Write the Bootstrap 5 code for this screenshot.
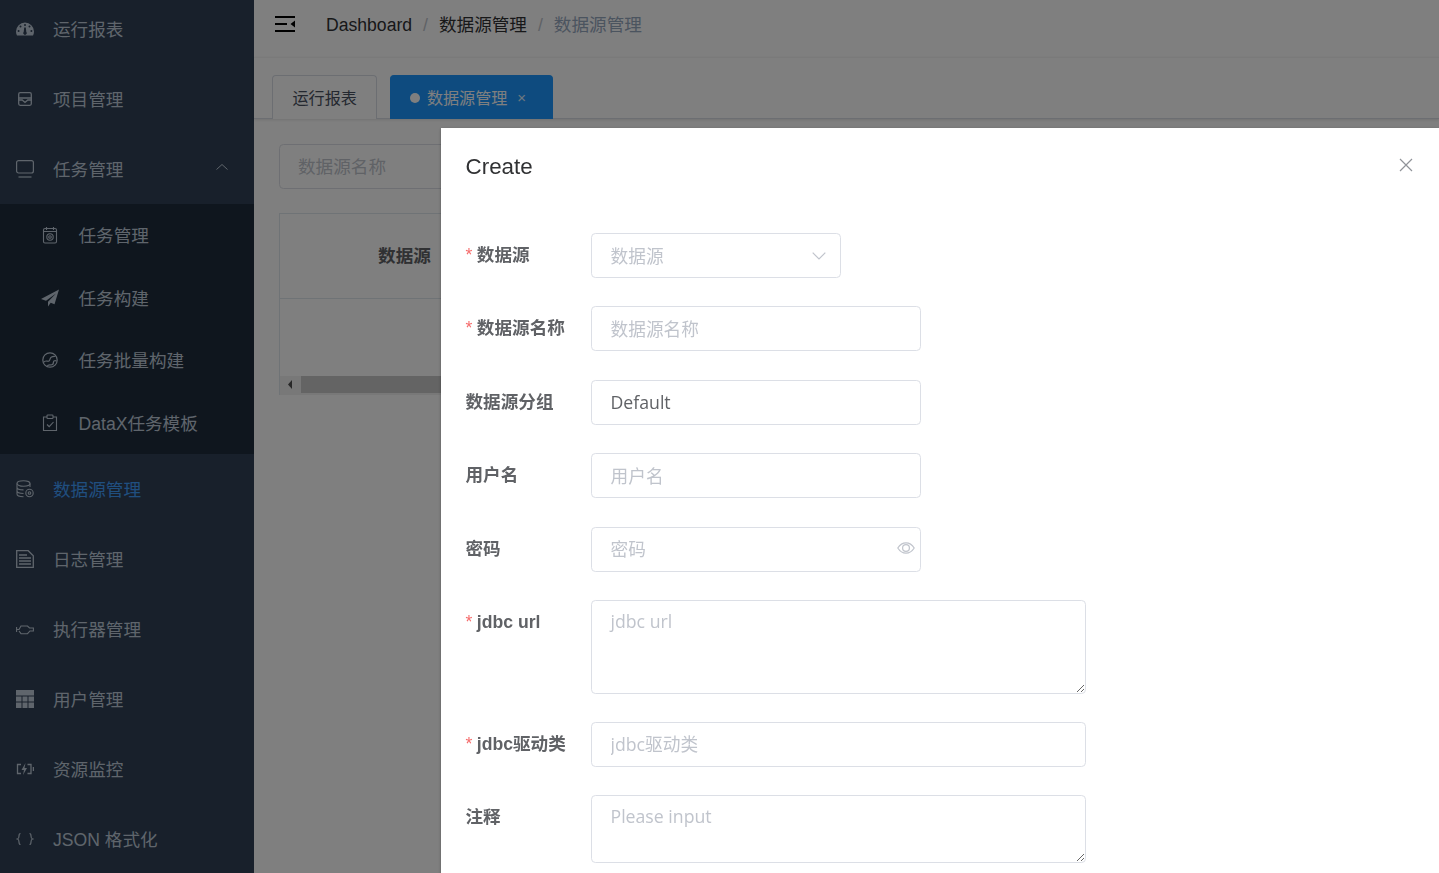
<!DOCTYPE html>
<html lang="zh-CN">
<head>
    <meta charset="UTF-8">
    <meta name="viewport" content="width=device-width, initial-scale=1.0">
    <title>数据源管理</title>
    <link href="https://cdn.jsdelivr.net/npm/bootstrap@5.3.0/dist/css/bootstrap.min.css" rel="stylesheet">
    <style>
        html, body { height: 100%; overflow: hidden; }
        body { font-family: "Liberation Sans", "Noto Sans CJK SC", sans-serif; font-size: 17.6px; background: #fff; color: #303133; }
        .app-wrap { height: 873px; }

        /* sidebar */
        .side-bar { width: 254px; flex: none; background: #304156; color: #bfcbd9; overflow: hidden; }
        .side-list { margin-top: -6px; }
        .side-item { height: 70px; padding-left: 16px; gap: 19px; }
        .side-item span { padding-top: 2px; }
        .side-item svg { width: 18px; height: 18px; flex: none; }
        .side-item.is-active { color: #409eff; }
        .side-item.is-active svg { color: #bfcbd9; }
        .side-sub { background: #1f2d3d; }
        .side-sub .side-item { height: 62.5px; padding-left: 41px; gap: 19.5px; }
        .side-arrow { margin-top: -4px; width: 12px !important; height: 12px !important; margin-left: auto; margin-right: 26px; }

        /* top bar */
        .main-col { min-width: 0; }
        .top-bar { height: 57px; padding: 0 0 7px 21px; gap: 31px; }
        .top-bar svg { width: 20px; height: 18px; flex: none; margin-top: -2px; }
        .crumbs { margin: 0; font-size: 17.6px; --bs-breadcrumb-divider: "/"; --bs-breadcrumb-item-padding-x: 11px; }
        .crumbs .breadcrumb-item.active { color: #97a8be; }
        .crumbs .breadcrumb-item::before { color: #c0c4cc; }
        .tags-bar { height: 62px; padding: 17px 0 0 18px; gap: 13px; border-top: 1px solid #f4f4f4; border-bottom: 1px solid #d8dce5; box-shadow: 0 1px 3px rgba(0,0,0,.12); }
        .tag-tab { height: 44px; padding: 2px 19px 0 19.5px; font-size: 16.1px; background: #fff; border: 1px solid #d8dce5; border-bottom: 0; border-radius: 4px 4px 0 0; color: #495060; }
        .tag-tab.is-current { width: 163px; padding-left: 19px; background: #1d97ff; border-color: #1d97ff; color: #fff; }
        .tag-dot { width: 10px; height: 10px; border-radius: 50%; background: #fff; margin-right: 7px; margin-top: -1px; }
        .tag-x { font-size: 15px; margin-left: 10px; opacity: .85; }

        /* list page behind the dialog */
        .page-body { padding: 25px; }
        .fake-search { width: 240px; height: 45px; padding: 1px 18px 0; border: 1px solid #dcdfe6; border-radius: 4.4px; color: #c0c4cc; }
        .fake-table { margin-top: 24px; height: 182px; width: 1135px; border: 1px solid #dfe6ec; }
        .fake-head { height: 85px; border-bottom: 1px solid #dfe6ec; }
        .fake-th { width: 249px; font-weight: 700; color: #606266; font-size: 17.6px; }
        .fake-scroll { height: 19px; background: #f1f1f1; margin-top: 77px; }
        .fake-scroll svg { width: 21px; height: 17px; flex: none; }
        .fake-thumb { flex: 1; height: 17px; background: #c9c9c9; }

        /* dialog */
        .dlg-box { width: 998px; max-width: none; margin: 128px 0 0 441px; }
        .dlg-box .modal-content { border: 0; border-radius: 0; box-shadow: 0 1px 3px rgba(0,0,0,.3); height: 760px; }
        .dlg-head { padding: 21px 26.5px 0 24.5px; height: 105px; align-items: flex-start; border: 0; }
        .dlg-head .modal-title { font-size: 22.4px; line-height: 36px; color: #303133; font-weight: 400; }
        .dlg-close { border: 0; background: none; padding: 0; margin-top: 9px; line-height: 0; color: #909399; }
        .dlg-body { padding: 0 24.5px; }
        .field-row { margin-bottom: 28.4px; }
        .field-label { width: 125.500px; flex: none; line-height: 45px; font-weight: 700; color: #606266; font-size: 17.6px; white-space: nowrap; }
        .field-req { color: #f56c6c; font-weight: 400; margin-right: 4.500px; }
        .field-input { height: 45px; padding: 0 18.500px; font-family: "Open Sans", "Noto Sans CJK SC", sans-serif; font-size: 17.7px; color: #606266; border: 1px solid #dcdfe6; border-radius: 4.4px; }
        .field-input::placeholder { color: #c0c4cc; opacity: 1; }
        textarea.field-input { padding: 4px 18.500px; line-height: 33px; resize: vertical; min-height: 0; }
        .w-select { width: 250px; }
        .w-input { width: 330px; }
        .w-area { width: 495px; }
        .h-area-a { height: 93.6px; }
        .h-area-b { height: 68px; }
        .field-icon { position: absolute; top: 50%; transform: translateY(-50%); color: #c0c4cc; line-height: 0; }
        .icon-arrow { right: 15px; }
        .icon-eye { right: 6px; margin-top: -1px; }
    </style>
</head>
<body>
<div class="app-wrap d-flex">
    <aside class="side-bar">
        <div class="side-list">
            <div class="side-item d-flex align-items-center">
                <svg viewBox="0 0 18 18" fill="currentColor"><path fill-rule="evenodd" d="M9 2.500a9 9 0 0 1 9 9c0 1.500-.4 2.900-1 4H1c-.6-1.100-1-2.500-1-4a9 9 0 0 1 9-9zM9 4a1 1 0 1 0 0 2 1 1 0 0 0 0-2zM4.500 5.600a1 1 0 1 0 0 2 1 1 0 0 0 0-2zM13.500 5.600a1 1 0 1 0 0 2 1 1 0 0 0 0-2zM2.600 10a1 1 0 1 0 0 2 1 1 0 0 0 0-2zM15.400 10a1 1 0 1 0 0 2 1 1 0 0 0 0-2zM9.800 7.500H8.200L7.700 12a1.700 1.700 0 1 0 2.600 0z"/></svg>
                <span>运行报表</span>
            </div>
            <div class="side-item d-flex align-items-center">
                <svg viewBox="0 0 18 18" fill="none" stroke="currentColor" stroke-width="1.300"><rect x="2.700" y="2.700" width="12.600" height="12.600" rx="1.500"/><path d="M2.700 8h12.600M2.700 10h3.500l2.800 2.500 2.800-2.500h3.500"/></svg>
                <span>项目管理</span>
            </div>
            <div class="side-item d-flex align-items-center">
                <svg viewBox="0 0 18 18" fill="none" stroke="currentColor" stroke-width="1.200"><rect x=".6" y=".6" width="16.800" height="12.400" rx="2"/><path d="M2.500 17h13"/></svg>
                <span>任务管理</span>
                <svg class="side-arrow" viewBox="0 0 12 12" fill="none" stroke="currentColor" stroke-width="1"><path d="M.5 8.500 6 3.500l5.500 5"/></svg>
            </div>
            <div class="side-sub">
                <div class="side-item d-flex align-items-center">
                    <svg viewBox="0 0 18 18" fill="none" stroke="currentColor" stroke-width="1.100"><rect x="2.500" y="2.500" width="13" height="14.500" rx="1.500"/><path d="M2.500 5.500h13M5.500 1v3M12.500 1v3"/><circle cx="9" cy="11" r="3.200"/><circle cx="9" cy="11" r="1.300"/></svg>
                    <span>任务管理</span>
                </div>
                <div class="side-item d-flex align-items-center">
                    <svg viewBox="0 0 18 18" fill="currentColor"><path d="M18 .5 0 10l5 1.700L15 4.500 7 12.800v4.700l2.700-3.700 3.800 1.400z"/></svg>
                    <span>任务构建</span>
                </div>
                <div class="side-item d-flex align-items-center">
                    <svg viewBox="0 0 18 18" fill="none" stroke="currentColor" stroke-width="1.200"><circle cx="9" cy="9" r="7.200"/><path d="M2.500 11.500c2-3 4-.5 5.500-1.500s.5-3 2.500-4 3-.5 4-1M6 15.500c1-2 2.500-1.500 4-1.500s2.500-1.500 2.500-3 2-1.500 3-1"/></svg>
                    <span>任务批量构建</span>
                </div>
                <div class="side-item d-flex align-items-center">
                    <svg viewBox="0 0 18 18" fill="none" stroke="currentColor" stroke-width="1.100"><path d="M6 3H2.500v13.500h13V3H12"/><rect x="6" y="1" width="6" height="3.500" rx=".8"/><path d="m6 10.500 2.200 2.200L12.500 8"/></svg>
                    <span>DataX任务模板</span>
                </div>
            </div>
            <div class="side-item is-active d-flex align-items-center">
                <svg viewBox="0 0 18 18" fill="none" stroke="currentColor" stroke-width="1.100"><ellipse cx="7.500" cy="3.500" rx="6.500" ry="2.700"/><path d="M1 3.500v10.500c0 1.500 3 2.700 6.500 2.700M14 3.500V7M1 7.200c0 1.500 3 2.700 6.500 2.700M1 10.800c0 1.500 3 2.700 6.500 2.700"/><circle cx="13.500" cy="13" r="3.700"/><circle cx="13.500" cy="13" r="1.300"/></svg>
                <span>数据源管理</span>
            </div>
            <div class="side-item d-flex align-items-center">
                <svg viewBox="0 0 18 18" fill="none" stroke="currentColor" stroke-width="1.300"><path d="M.7.7h11.500l5.100 5v11.600H.7z"/><path d="M3 5h8M3 8h12M3 11h12M3 14h12" stroke-width="1.500"/></svg>
                <span>日志管理</span>
            </div>
            <div class="side-item d-flex align-items-center">
                <svg viewBox="0 0 18 18" fill="none" stroke="currentColor" stroke-width="1.100"><path d="M.6 7v5M.6 9.500h2.400L5 6h6.500l2 2h3.900v3h-3.400l-2.500 2.700H5L3 11"/></svg>
                <span>执行器管理</span>
            </div>
            <div class="side-item d-flex align-items-center">
                <svg viewBox="0 0 18 18" fill="currentColor"><path d="M0 0h18v5.500H0zM0 6.500h5.500V11.500H0zM6.500 6.500h5V11.500h-5zM12.500 6.500H18V11.500h-5.500zM0 12.500h5.500V18H0zM6.500 12.500h5V18h-5zM12.500 12.500H18V18h-5.500z"/></svg>
                <span>用户管理</span>
            </div>
            <div class="side-item d-flex align-items-center">
                <svg viewBox="0 0 18 18" fill="none" stroke="currentColor" stroke-width="1.300"><path d="M5 4.500H1.500v9H5M11.500 4.500h3.500v9h-3.500M17.400 7v4"/><path fill="currentColor" stroke="none" d="M9.500 3 5.500 10h2.500l-1 5 4-7H8.500z"/></svg>
                <span>资源监控</span>
            </div>
            <div class="side-item d-flex align-items-center">
                <svg viewBox="0 0 18 18" fill="none" stroke="currentColor" stroke-width="1.200"><path d="M4.500 3.500C3 3.500 3 4.500 3 6s0 2.500-1.500 3C3 9.500 3 10.500 3 12s0 2.500 1.500 2.500M13.500 3.500C15 3.500 15 4.500 15 6s0 2.500 1.500 3c-1.500.5-1.500 1.500-1.500 3s0 2.500-1.500 2.500"/></svg>
                <span>JSON 格式化</span>
            </div>
        </div>
    </aside>

    <div class="main-col flex-grow-1">
        <div class="top-bar d-flex align-items-center">
            <svg viewBox="0 0 20 18" fill="currentColor" class="text-black"><path d="M0 1h20v2H0zM0 8h12v2H0zM0 15h20v2H0zM20 5.500v7L15.500 9z"/></svg>
            <ol class="breadcrumb crumbs">
                <li class="breadcrumb-item">Dashboard</li>
                <li class="breadcrumb-item">数据源管理</li>
                <li class="breadcrumb-item active">数据源管理</li>
            </ol>
        </div>
        <div class="tags-bar d-flex">
            <div class="tag-tab d-flex align-items-center">运行报表</div>
            <div class="tag-tab is-current d-flex align-items-center">
                <span class="tag-dot"></span><span>数据源管理</span><span class="tag-x">×</span>
            </div>
        </div>
        <div class="page-body">
            <div class="fake-search d-flex align-items-center">数据源名称</div>
            <div class="fake-table">
                <div class="fake-head d-flex align-items-center">
                    <div class="fake-th text-center">数据源</div>
                </div>
                <div class="fake-scroll d-flex">
                    <svg viewBox="0 0 21 17" fill="#505050"><path d="M8 8.500 12 4v9z"/></svg>
                    <div class="fake-thumb"></div>
                </div>
            </div>
        </div>
    </div>
</div>

<div class="modal-backdrop show"></div>
<div class="modal d-block">
    <div class="modal-dialog dlg-box">
        <div class="modal-content">
            <div class="modal-header dlg-head">
                <h5 class="modal-title">Create</h5>
                <button type="button" class="dlg-close" aria-label="Close">
                    <svg width="14" height="14" viewBox="0 0 14 14" fill="none" stroke="currentColor" stroke-width="1.200"><path d="M1 1l12 12M13 1 1 13"/></svg>
                </button>
            </div>
            <form class="modal-body dlg-body">
                <div class="field-row d-flex">
                    <label class="field-label"><span class="field-req">*</span>数据源</label>
                    <div class="position-relative w-select">
                        <input class="form-control field-input" placeholder="数据源">
                        <span class="field-icon icon-arrow"><svg width="14" height="8" viewBox="0 0 14 8" fill="none" stroke="currentColor" stroke-width="1.200"><path d="m.7.7 6.300 6.300L13.300.7"/></svg></span>
                    </div>
                </div>
                <div class="field-row d-flex">
                    <label class="field-label"><span class="field-req">*</span>数据源名称</label>
                    <input class="form-control field-input w-input" placeholder="数据源名称">
                </div>
                <div class="field-row d-flex">
                    <label class="field-label">数据源分组</label>
                    <input class="form-control field-input w-input" value="Default">
                </div>
                <div class="field-row d-flex">
                    <label class="field-label">用户名</label>
                    <input class="form-control field-input w-input" placeholder="用户名">
                </div>
                <div class="field-row d-flex">
                    <label class="field-label">密码</label>
                    <div class="position-relative w-input">
                        <input class="form-control field-input" placeholder="密码">
                        <span class="field-icon icon-eye"><svg width="18" height="14" viewBox="0 0 18 14" fill="none" stroke="currentColor" stroke-width="1.200"><path d="M.8 7C3 3.500 5.800 1.800 9 1.800s6 1.700 8.200 5.200c-2.200 3.500-5 5.200-8.200 5.200S3 10.500.8 7z"/><circle cx="9" cy="7" r="3.400"/></svg></span>
                    </div>
                </div>
                <div class="field-row d-flex">
                    <label class="field-label"><span class="field-req">*</span>jdbc url</label>
                    <textarea class="form-control field-input w-area h-area-a" placeholder="jdbc url"></textarea>
                </div>
                <div class="field-row d-flex">
                    <label class="field-label"><span class="field-req">*</span>jdbc驱动类</label>
                    <input class="form-control field-input w-area" placeholder="jdbc驱动类">
                </div>
                <div class="field-row d-flex">
                    <label class="field-label">注释</label>
                    <textarea class="form-control field-input w-area h-area-b" placeholder="Please input"></textarea>
                </div>
            </form>
        </div>
    </div>
</div>
<script src="https://cdn.jsdelivr.net/npm/bootstrap@5.3.0/dist/js/bootstrap.bundle.min.js"></script>
</body>
</html>
